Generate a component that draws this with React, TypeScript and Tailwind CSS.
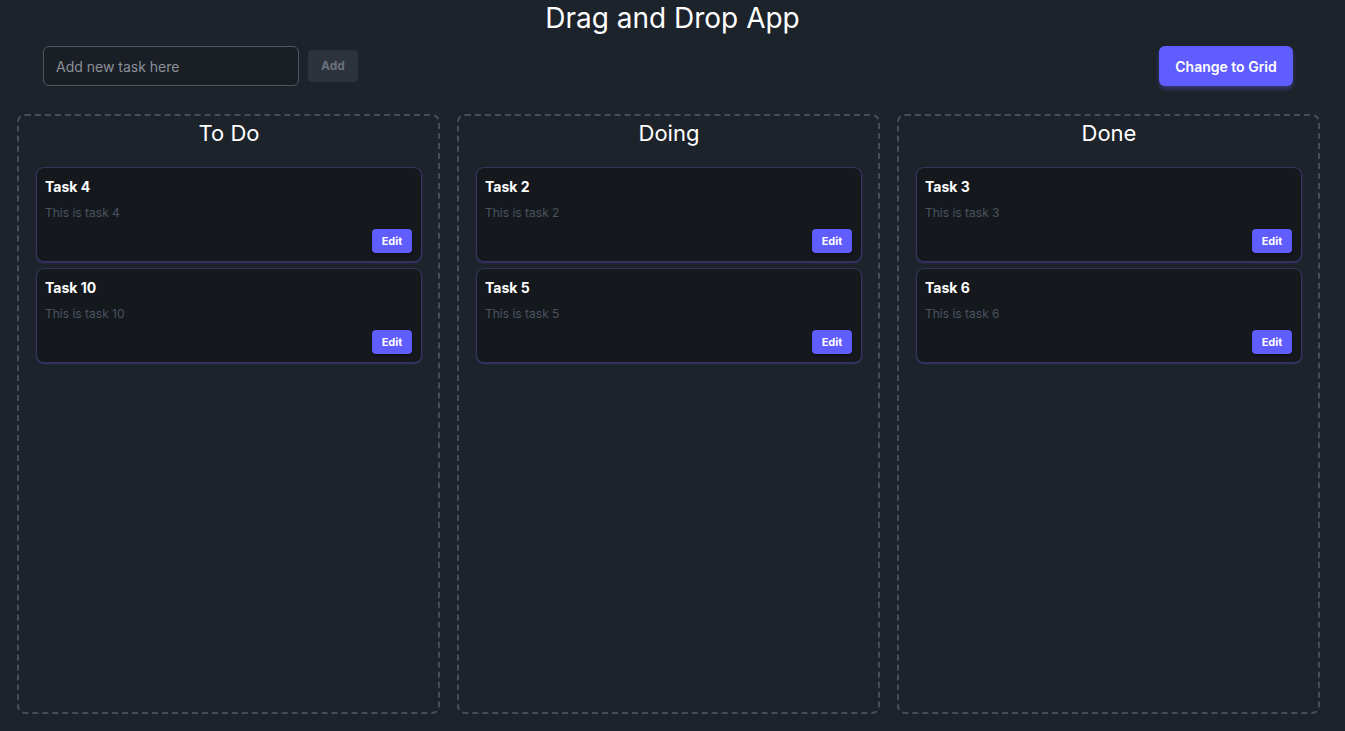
import { useState } from 'react';

interface Task {
  id: number;
  title: string;
  description: string;
}

interface Column {
  name: string;
  tasks: Task[];
}

const initialColumns: Column[] = [
  {
    name: 'To Do',
    tasks: [
      { id: 4, title: 'Task 4', description: 'This is task 4' },
      { id: 10, title: 'Task 10', description: 'This is task 10' },
    ],
  },
  {
    name: 'Doing',
    tasks: [
      { id: 2, title: 'Task 2', description: 'This is task 2' },
      { id: 5, title: 'Task 5', description: 'This is task 5' },
    ],
  },
  {
    name: 'Done',
    tasks: [
      { id: 3, title: 'Task 3', description: 'This is task 3' },
      { id: 6, title: 'Task 6', description: 'This is task 6' },
    ],
  },
];

function TaskCard({ task }: { task: Task }) {
  return (
    <div className="rounded-lg border border-[#38325a] bg-[#15191e] px-2 pb-2 pt-[9px] shadow-[0_1px_2px_rgba(96,93,255,0.35)]">
      <h3 className="text-sm font-bold leading-5 text-white">{task.title}</h3>
      <p className="mt-2 text-xs leading-4 text-[#4b5360]">{task.description}</p>
      <div className="mt-2 flex justify-end pr-px">
        <button className="h-6 w-10 rounded bg-[#605dff] text-[11px] font-bold text-white shadow-[0_2px_3px_rgba(0,0,0,0.4)]">
          Edit
        </button>
      </div>
    </div>
  );
}

export default function App() {
  const [columns] = useState<Column[]>(initialColumns);
  const [newTask, setNewTask] = useState<string>('');

  return (
    <div className="min-h-screen bg-[#1d232a] font-['Inter','Liberation_Sans',sans-serif]">
      <h1 className="text-center text-[28px] leading-9 text-white">Drag and Drop App</h1>

      <div className="mt-[10px] flex items-center justify-between pl-[43px] pr-[52px]">
        <div className="flex items-center gap-[9px]">
          <input
            type="text"
            value={newTask}
            onChange={(e) => setNewTask(e.target.value)}
            placeholder="Add new task here"
            className="h-10 w-64 rounded-md border border-[#4f565f] bg-[#1a1f25] px-3 pt-px text-sm text-white placeholder:text-[#8b9099] focus:outline-none"
          />
          <button className="h-8 w-[50px] rounded bg-[#2c333c] text-xs font-bold text-[#6b717a]">
            Add
          </button>
        </div>
        <button className="h-10 w-[134px] rounded-md bg-[#605dff] pt-[2px] text-sm font-semibold text-white shadow-[0_3px_4px_rgba(96,93,255,0.35)]">
          Change to Grid
        </button>
      </div>

      <div className="mt-[28px] grid grid-cols-3 gap-[17px] pb-[18px] pl-[17px] pr-[25px]">
        {columns.map((col) => (
          <div
            key={col.name}
            className="h-[600px] rounded-lg border-2 border-dashed border-[#454d59] pl-[17px] pr-4"
          >
            <h2 className="pt-px text-center text-[22px] leading-8 text-white">{col.name}</h2>
            <div className="mt-[18px] flex flex-col gap-[6px]">
              {col.tasks.map((task) => (
                <TaskCard key={task.id} task={task} />
              ))}
            </div>
          </div>
        ))}
      </div>
    </div>
  );
}
